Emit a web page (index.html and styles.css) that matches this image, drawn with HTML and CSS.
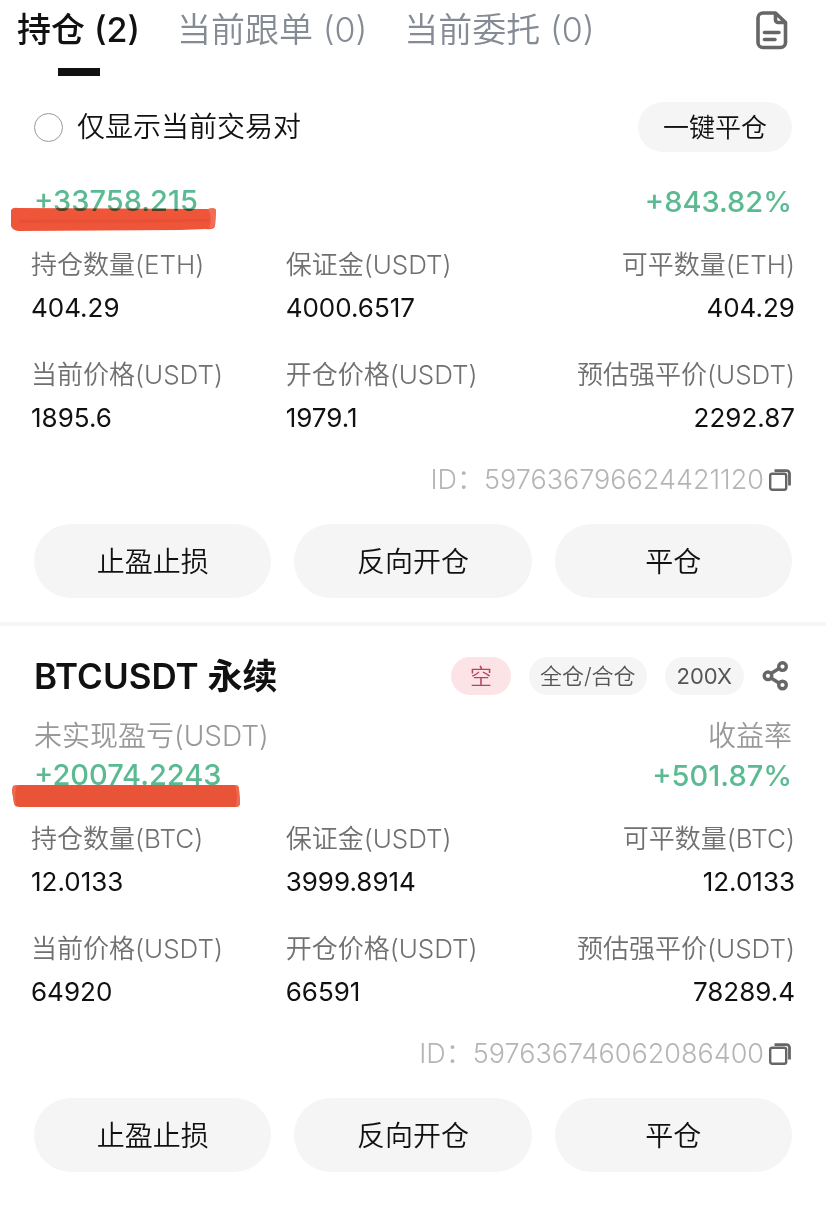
FILE: index.html
```html
<!DOCTYPE html>
<html lang="zh-CN">
<head>
<meta charset="utf-8">
<meta name="viewport" content="width=device-width, initial-scale=1">
<title>持仓</title>
<link rel="stylesheet" href="styles.css">
</head>
<body>
<svg class="defs" aria-hidden="true">
  <symbol id="copy" viewBox="0 0 24 24">
    <path d="M6.500 2.600H18.500a3 3 0 0 1 3 3V17.500" fill="none" stroke="currentColor" stroke-width="2.800"/>
    <rect x="2.200" y="5.800" width="16" height="16" rx="2" fill="#fff" stroke="currentColor" stroke-width="2.400"/>
  </symbol>
</svg>

<header class="header">
  <nav class="tabs">
    <button class="tab tab-active" type="button">持仓 (2)</button>
    <button class="tab" type="button">当前跟单 (0)</button>
    <button class="tab" type="button">当前委托 (0)</button>
  </nav>
  <button class="icon-button" type="button" aria-label="记录">
    <svg class="doc-icon" viewBox="0 0 34 40" fill="none" stroke="currentColor" stroke-width="3.600" stroke-linecap="round" stroke-linejoin="round">
      <path d="M8 3H20.500L30.500 12.500V32.500a5 5 0 0 1-5 5H8a5 5 0 0 1-5-5V8a5 5 0 0 1 5-5Z"/>
      <path d="M20.500 3.500V10a2.500 2.500 0 0 0 2.500 2.500H30M9.500 22.500H24M9.500 29.500H20"/>
    </svg>
  </button>
</header>

<main>
  <div class="filter">
    <label class="check"><input class="check-box" type="checkbox">仅显示当前交易对</label>
    <button class="close-all" type="button">一键平仓</button>
  </div>

  <section class="position">
    <div class="profit">
      <div class="profit-side">
        <span class="profit-value">+33758.215</span>
        <svg class="marker marker-blend" viewBox="0 0 206 24" preserveAspectRatio="none" aria-hidden="true">
          <path d="M1 3Q3 0 8 1L198 2Q205 0 206 3L205 19Q204 23 196 22L170 23L8 24Q2 23 1 19Z" fill="#ee5539"/>
          <path d="M198 2Q205 0 206 3L205 19Q202 22 199 21Q203 12 198 2Z" fill="#f26d56"/>
          <path d="M9 13L199 12V15L9 16Z" fill="#e85035"/>
        </svg>
      </div>
      <span class="profit-value">+843.82%</span>
    </div>
    <dl class="metrics">
      <div class="metric"><dt>持仓数量(ETH)</dt><dd>404.29</dd></div>
      <div class="metric"><dt>保证金(USDT)</dt><dd>4000.6517</dd></div>
      <div class="metric metric-end"><dt>可平数量(ETH)</dt><dd>404.29</dd></div>
      <div class="metric"><dt>当前价格(USDT)</dt><dd>1895.6</dd></div>
      <div class="metric"><dt>开仓价格(USDT)</dt><dd>1979.1</dd></div>
      <div class="metric metric-end"><dt>预估强平价(USDT)</dt><dd>2292.87</dd></div>
    </dl>
    <div class="order-id">
      <span>ID：597636796624421120</span>
      <button class="icon-button" type="button" aria-label="复制"><svg class="copy-icon"><use href="#copy"/></svg></button>
    </div>
    <div class="actions">
      <button class="action" type="button">止盈止损</button>
      <button class="action" type="button">反向开仓</button>
      <button class="action" type="button">平仓</button>
    </div>
  </section>

  <section class="position position-next">
    <div class="title-row">
      <h2 class="pair">BTCUSDT 永续</h2>
      <div class="tags">
        <span class="tag tag-short">空</span>
        <span class="tag">全仓/合仓</span>
        <span class="tag tag-leverage">200X</span>
        <button class="icon-button" type="button" aria-label="分享">
          <svg class="share-icon" viewBox="0 0 30 30" fill="none" stroke="currentColor" stroke-width="3.400">
            <path d="M9 12.500L17 7.500M9 17L17 22"/>
            <circle cx="6" cy="14.800" r="3.800"/><circle cx="20.500" cy="5.600" r="3.800"/><circle cx="20.500" cy="24" r="3.800"/>
          </svg>
        </button>
      </div>
    </div>
    <div class="profit-labels"><span>未实现盈亏(USDT)</span><span>收益率</span></div>
    <div class="profit">
      <div class="profit-side">
        <span class="profit-value">+20074.2243</span>
        <svg class="marker marker-wide" viewBox="0 0 228 22" preserveAspectRatio="none" aria-hidden="true">
          <path d="M1 1Q3 0 8 0H222Q227 0 227 4L228 18Q228 22 223 22H8Q2 22 2 18L0 6Z" fill="#e95439"/>
          <path d="M1 1L5 0Q2 8 4 21L2 18L0 6ZM223 0Q227 0 227 4L228 18Q228 22 224 22Q226 11 223 0Z" fill="#ed6950"/>
        </svg>
      </div>
      <span class="profit-value">+501.87%</span>
    </div>
    <dl class="metrics">
      <div class="metric"><dt>持仓数量(BTC)</dt><dd>12.0133</dd></div>
      <div class="metric"><dt>保证金(USDT)</dt><dd>3999.8914</dd></div>
      <div class="metric metric-end"><dt>可平数量(BTC)</dt><dd>12.0133</dd></div>
      <div class="metric"><dt>当前价格(USDT)</dt><dd>64920</dd></div>
      <div class="metric"><dt>开仓价格(USDT)</dt><dd>66591</dd></div>
      <div class="metric metric-end"><dt>预估强平价(USDT)</dt><dd>78289.4</dd></div>
    </dl>
    <div class="order-id">
      <span>ID：597636746062086400</span>
      <button class="icon-button" type="button" aria-label="复制"><svg class="copy-icon"><use href="#copy"/></svg></button>
    </div>
    <div class="actions">
      <button class="action" type="button">止盈止损</button>
      <button class="action" type="button">反向开仓</button>
      <button class="action" type="button">平仓</button>
    </div>
  </section>
</main>
</body>
</html>
```
FILE: styles.css
```css
* { box-sizing: border-box; }

body {
  margin: 0;
  background: #fff;
  color: #111;
  font-family: Inter, "Noto Sans CJK SC", sans-serif;
  font-size: 26px;
  font-weight: 350;
}

button {
  margin: 0;
  padding: 0;
  border: 0;
  background: none;
  color: inherit;
  font: inherit;
  white-space: nowrap;
  cursor: pointer;
}

.defs { display: none; }

.icon-button { display: flex; color: #666; }

.header {
  display: flex;
  justify-content: space-between;
  align-items: flex-start;
  padding: 10px 37px 0 17px;
}

.tabs { display: flex; gap: 37px; }

.tab {
  display: flex;
  flex-direction: column;
  align-items: center;
  gap: 18px;
  color: #858b94;
  font-size: 34px;
  line-height: 40px;
}

.tab::after { content: ""; width: 42px; height: 8px; }
.tab-active { color: #111; font-weight: 500; }
.tab-active::after { background: #111; }

.doc-icon { width: 34px; height: 40px; }

.filter {
  display: flex;
  justify-content: space-between;
  align-items: center;
  padding: 26px 34px 0;
}

.check { display: flex; align-items: center; gap: 14px; font-size: 28px; line-height: 40px; }

.check-box {
  appearance: none;
  width: 29px;
  height: 29px;
  margin: 0;
  border: 1px solid #999;
  border-radius: 50%;
}

.check-box:checked { background: #111; }

.close-all {
  height: 50px;
  padding: 0 25px 4px;
  border-radius: 25px;
  background: #f5f5f5;
}

.position { padding: 31px 34px 24px; }
.position-next { padding-top: 30px; border-top: 4px solid #f6f6f6; }

.title-row, .tags, .profit, .profit-labels {
  display: flex;
  justify-content: space-between;
  align-items: center;
}

.pair { margin: 0; font-size: 35px; font-weight: 600; line-height: 40px; }

.tags { gap: 18px; }

.tag {
  padding: 0 11px;
  border-radius: 19px;
  background: #f5f5f5;
  color: #555;
  font-size: 22px;
  line-height: 38px;
}

.tag-short { padding: 0 19px; background: #fce4e6; color: #b8435c; }
.tag-leverage { padding: 0 12px; font-weight: 400; }

.share-icon { width: 30px; height: 30px; }

.profit-labels {
  padding: 20px 0 1px;
  color: #999;
  font-size: 28px;
  line-height: 40px;
}

.profit { line-height: 36px; }
.profit-side { position: relative; }
.profit-value { color: #5bba92; font-size: 29px; font-weight: 500; }

.marker { position: absolute; left: -24px; top: 24px; width: 206px; height: 24px; }
.marker-blend { mix-blend-mode: multiply; }
.marker-wide { width: 228px; height: 22px; left: -22px; top: 28px; }

.metrics {
  display: grid;
  grid-template-columns: repeat(3, 1fr);
  row-gap: 33px;
  margin: 28px -3px 0;
  line-height: 34px;
}

.metric { display: flex; flex-direction: column; gap: 9px; white-space: nowrap; }
.metric-end { align-items: flex-end; }
.metric dt { color: #707070; }
.metric dd { margin: 0; font-weight: 400; }

.order-id {
  display: flex;
  justify-content: flex-end;
  align-items: center;
  gap: 4px;
  margin-top: 28px;
  color: #b5b5b5;
  font-size: 27px;
  line-height: 34px;
}

.copy-icon { width: 24px; height: 24px; }

.actions {
  display: grid;
  grid-template-columns: repeat(3, 1fr);
  gap: 23px;
  margin-top: 27px;
}

.action {
  height: 74px;
  padding-bottom: 3px;
  border-radius: 37px;
  background: #f5f5f5;
  font-size: 28px;
}
```
